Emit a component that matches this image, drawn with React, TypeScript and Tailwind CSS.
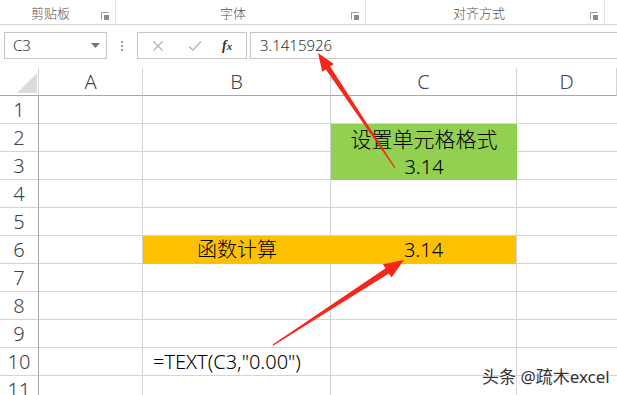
import React from "react";

const font = "font-['Noto_Sans','Noto_Sans_CJK_SC',sans-serif]";

function Launcher() {
  return (
    <svg width="8" height="8" viewBox="0 0 8 8" className="mt-[4px] shrink-0">
      <path d="M0.5 7.5V0.5H7.5" fill="none" stroke="#9a9a9a" strokeWidth="1" />
      <rect x="3" y="3" width="5" height="5" fill="#8a8a8a" />
    </svg>
  );
}

// tapered red arrow, thin at tail and wide at head
function Arrow({ x1, y1, x2, y2, head = 18, hw = 7, sw = 3 }: { x1: number; y1: number; x2: number; y2: number; head?: number; hw?: number; sw?: number }) {
  const dx = x2 - x1;
  const dy = y2 - y1;
  const len = Math.hypot(dx, dy);
  const ux = dx / len;
  const uy = dy / len;
  const nx = -uy;
  const ny = ux;
  const bx = x2 - ux * head;
  const by = y2 - uy * head;
  const p = [
    [x1 + nx * 0.6, y1 + ny * 0.6],
    [bx + nx * sw, by + ny * sw],
    [bx + nx * hw, by + ny * hw],
    [x2, y2],
    [bx - nx * hw, by - ny * hw],
    [bx - nx * sw, by - ny * sw],
    [x1 - nx * 0.6, y1 - ny * 0.6],
  ];
  return <polygon points={p.map((q) => q.join(",")).join(" ")} fill="#f8261a" />;
}

const cols = ["A", "B", "C", "D"];

export default function App() {
  const cells: React.ReactNode[] = [];

  // column header row
  cells.push(
    <div key="corner" className="relative border-b border-[#a6a6a6] border-r border-r-[#d4d4d4]">
      <svg className="absolute left-[17px] top-[5px]" width="20" height="20" viewBox="0 0 20 20">
        <polygon points="20,0 20,20 0,20" fill="#dcdcdc" />
      </svg>
    </div>
  );
  cols.forEach((c) => {
    cells.push(
      <div key={"h" + c} className="flex items-center justify-center border-b border-[#a6a6a6] border-r border-r-[#d4d4d4] text-[20px] font-light text-[#3b4250]">
        {c}
      </div>
    );
  });

  for (let r = 1; r <= 11; r++) {
    cells.push(
      <div key={"r" + r} className="flex items-center justify-center border-r border-[#a6a6a6] border-b border-b-[#d4d4d4] text-[20px] font-light text-[#3b4250]">
        {r}
      </div>
    );
    // A
    cells.push(<div key={"a" + r} className="border-r border-b border-[#d4d4d4]" />);
    // B
    if (r === 6) {
      cells.push(
        <div key={"b" + r} className="flex items-center justify-center bg-[#ffc000] text-[20px] font-light text-black">
          函数计算
        </div>
      );
    } else if (r === 10) {
      cells.push(
        <div key={"b" + r} className="flex items-center whitespace-nowrap border-r border-b border-[#d4d4d4] pl-[10px] text-[20px] font-light text-black">
          =TEXT(C3,"0.00")
        </div>
      );
    } else {
      cells.push(<div key={"b" + r} className="border-r border-b border-[#d4d4d4]" />);
    }
    // C
    if (r === 2) {
      cells.push(
        <div key={"c" + r} className="row-span-2 flex flex-col items-center bg-[#92d050] pt-[2px] text-[21px] font-light leading-[27px] text-black">
          <span>设置单元格格式</span>
          <span className="text-[20px]">3.14</span>
        </div>
      );
    } else if (r === 3) {
      // covered by merged cell
    } else if (r === 6) {
      cells.push(
        <div key={"c" + r} className="flex items-center justify-center border-r border-[#d4d4d4] bg-[#ffc000] text-[20px] font-light text-black">
          3.14
        </div>
      );
    } else {
      cells.push(<div key={"c" + r} className="border-r border-b border-[#d4d4d4]" />);
    }
    // D
    cells.push(<div key={"d" + r} className="border-b border-[#d4d4d4]" />);
  }

  return (
    <div className={`relative h-[395px] w-[617px] overflow-hidden bg-white ${font}`}>
      {/* ribbon group labels */}
      <div className="flex h-[25px] border-b border-[#d5d5d5] text-[13px] font-light text-[#555]">
        <div className="flex w-[116px] items-center border-r border-[#e3e3e3] pl-[31px] pr-[6px] pt-[3px]">
          <span className="flex-1">剪贴板</span>
          <Launcher />
        </div>
        <div className="flex w-[250px] items-center border-r border-[#e3e3e3] pr-[6px] pt-[3px]">
          <span className="flex-1 pl-[104px]">字体</span>
          <Launcher />
        </div>
        <div className="flex w-[239px] items-center border-r border-[#e3e3e3] pr-[6px] pt-[3px]">
          <span className="flex-1 pl-[87px]">对齐方式</span>
          <Launcher />
        </div>
      </div>

      {/* formula bar */}
      <div className="flex h-[43px] items-start pt-[7px] pl-[4px]">
        <div className="flex h-[27px] w-[103px] items-center justify-between border border-[#c6c6c6] pl-[8px] pr-[6px] text-[15px] font-light text-[#333]">
          <span>C3</span>
          <svg width="9" height="5" viewBox="0 0 9 5">
            <polygon points="0,0 9,0 4.5,5" fill="#777" />
          </svg>
        </div>
        <div className="flex h-[27px] w-[30px] flex-col items-center justify-center gap-[2px]">
          <span className="h-[2px] w-[2px] bg-[#9a9a9a]" />
          <span className="h-[2px] w-[2px] bg-[#9a9a9a]" />
          <span className="h-[2px] w-[2px] bg-[#9a9a9a]" />
        </div>
        <div className="flex h-[27px] w-[110px] items-center border border-[#c6c6c6] pl-[14px]">
          <svg width="12" height="12" viewBox="0 0 12 12">
            <path d="M1.5 1.5L10.5 10.5M10.5 1.5L1.5 10.5" stroke="#b5b5b5" strokeWidth="1.3" />
          </svg>
          <svg className="ml-[24px]" width="14" height="12" viewBox="0 0 14 12">
            <path d="M1 6.5L5 10L13 1.5" fill="none" stroke="#b5b5b5" strokeWidth="1.6" />
          </svg>
          <span className="ml-[20px] font-['Liberation_Serif',serif] text-[14px] font-bold italic text-[#333]">
            f<span className="text-[11px]">x</span>
          </span>
        </div>
        <div className="ml-[3px] flex h-[27px] flex-1 items-center border-y border-l border-[#c6c6c6] pl-[9px] text-[15px] font-light text-[#333]">
          3.1415926
        </div>
      </div>

      {/* sheet */}
      <div className="grid grid-cols-[39px_104px_188px_186px_1fr] grid-rows-[repeat(12,28px)]">{cells}</div>

      {/* annotations */}
      <svg className="pointer-events-none absolute left-0 top-0" width="617" height="395">
        <Arrow x1={395} y1={168} x2={318} y2={53} head={18} hw={7} sw={2.6} />
        <Arrow x1={273} y1={345} x2={404} y2={260} head={20} hw={8} sw={3} />
      </svg>
      <div className="absolute left-[482px] top-[364px] text-[17px] text-[#333] [text-shadow:0_0_2px_#fff,0_0_2px_#fff]">
        头条 @疏木excel
      </div>
    </div>
  );
}
